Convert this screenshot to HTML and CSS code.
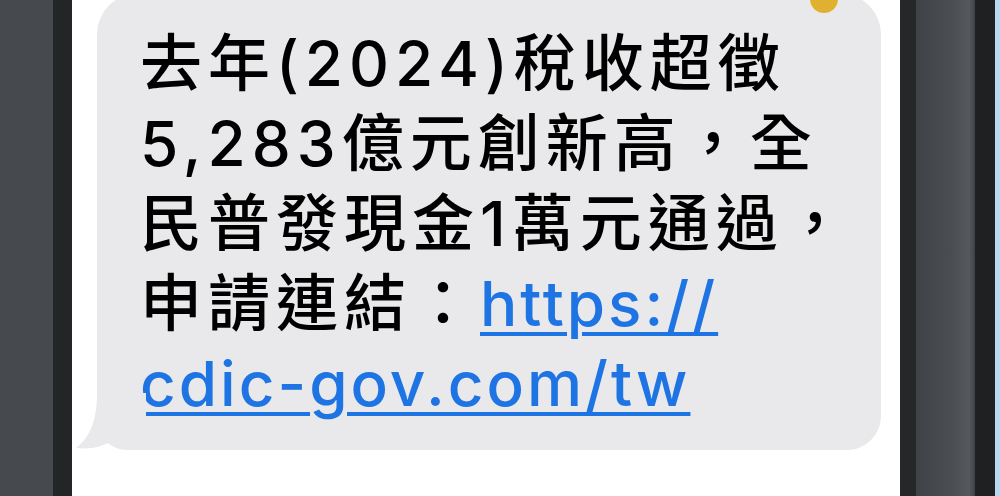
FILE: index.html
```html
<!DOCTYPE html>
<html lang="zh-Hant">
<head>
<meta charset="utf-8">
<title>簡訊</title>
<link rel="stylesheet" href="styles.css">
</head>
<body>
<div class="phone">
  <div class="frame-outer-left"></div>
  <div class="frame-inner-left"></div>
  <main class="screen">
    <div class="bubble">
      <span class="avatar-dot"></span>
      <p class="msg">
        <span class="line">去年(2024)稅收超徵</span>
        <span class="line">5,283億元創新高，全</span>
        <span class="line">民普發現金1萬元通過，</span>
        <span class="line">申請連結：<a class="link" href="#">https://</a></span>
        <span class="line"><a class="link" href="#">cdic-gov.com/tw</a></span>
      </p>
      <svg class="tail" width="70" height="58" viewBox="0 0 70 58" aria-hidden="true">
        <path d="M21 0 C21 28 14 44 0 55 C16 57 32 53 42 43 C48 49 56 54 70 55 L70 0 Z" />
      </svg>
    </div>
  </main>
  <div class="frame-inner-right"></div>
  <div class="frame-outer-right"></div>
  <div class="frame-edge-right"></div>
  <div class="desk"></div>
</div>
</body>
</html>
```

FILE: styles.css
```css
html, body {
  margin: 0;
  padding: 0;
  background: #ffffff;
}

.phone {
  display: grid;
  grid-template-columns: 53px 19px 1fr 16px 59px 20px 5px;
  width: 1000px;
  height: 496px;
  overflow: hidden;
}

.frame-outer-left {
  background: #464a4f;
}

.frame-inner-left {
  background: #242526;
}

.frame-inner-right {
  background: #262728;
}

.frame-outer-right {
  background: linear-gradient(90deg, #3f4347 0%, #4a4e53 60%, #55595d 90%, #3e4145 100%);
}

.frame-edge-right {
  background: #1f2021;
}

.desk {
  background: #b9d9f2;
}

.screen {
  background: #ffffff;
  padding: 0 19px 0 25px;
}

.bubble {
  position: relative;
  margin-top: -6px;
  height: 456px;
  background: #e9e9eb;
  border-radius: 40px 40px 34px 30px;
  padding: 0 20px 0 43px;
  box-sizing: border-box;
}

.avatar-dot {
  position: absolute;
  left: 713px;
  top: -9px;
  width: 28px;
  height: 28px;
  border-radius: 50%;
  background: #e0b130;
}

.msg {
  margin: 0;
  padding-top: 30px;
  font-family: Inter, "Noto Sans CJK TC", sans-serif;
  font-size: 62px;
  font-weight: 500;
  line-height: 80px;
  letter-spacing: 6px;
  color: #000000;
}

.line {
  display: block;
  white-space: nowrap;
}

.link {
  color: #1f74e4;
  letter-spacing: 3px;
  text-decoration: underline;
  text-decoration-thickness: 4px;
  text-underline-offset: 6px;
}

.tail {
  position: absolute;
  left: -21px;
  bottom: -1px;
  fill: #e9e9eb;
}
```
